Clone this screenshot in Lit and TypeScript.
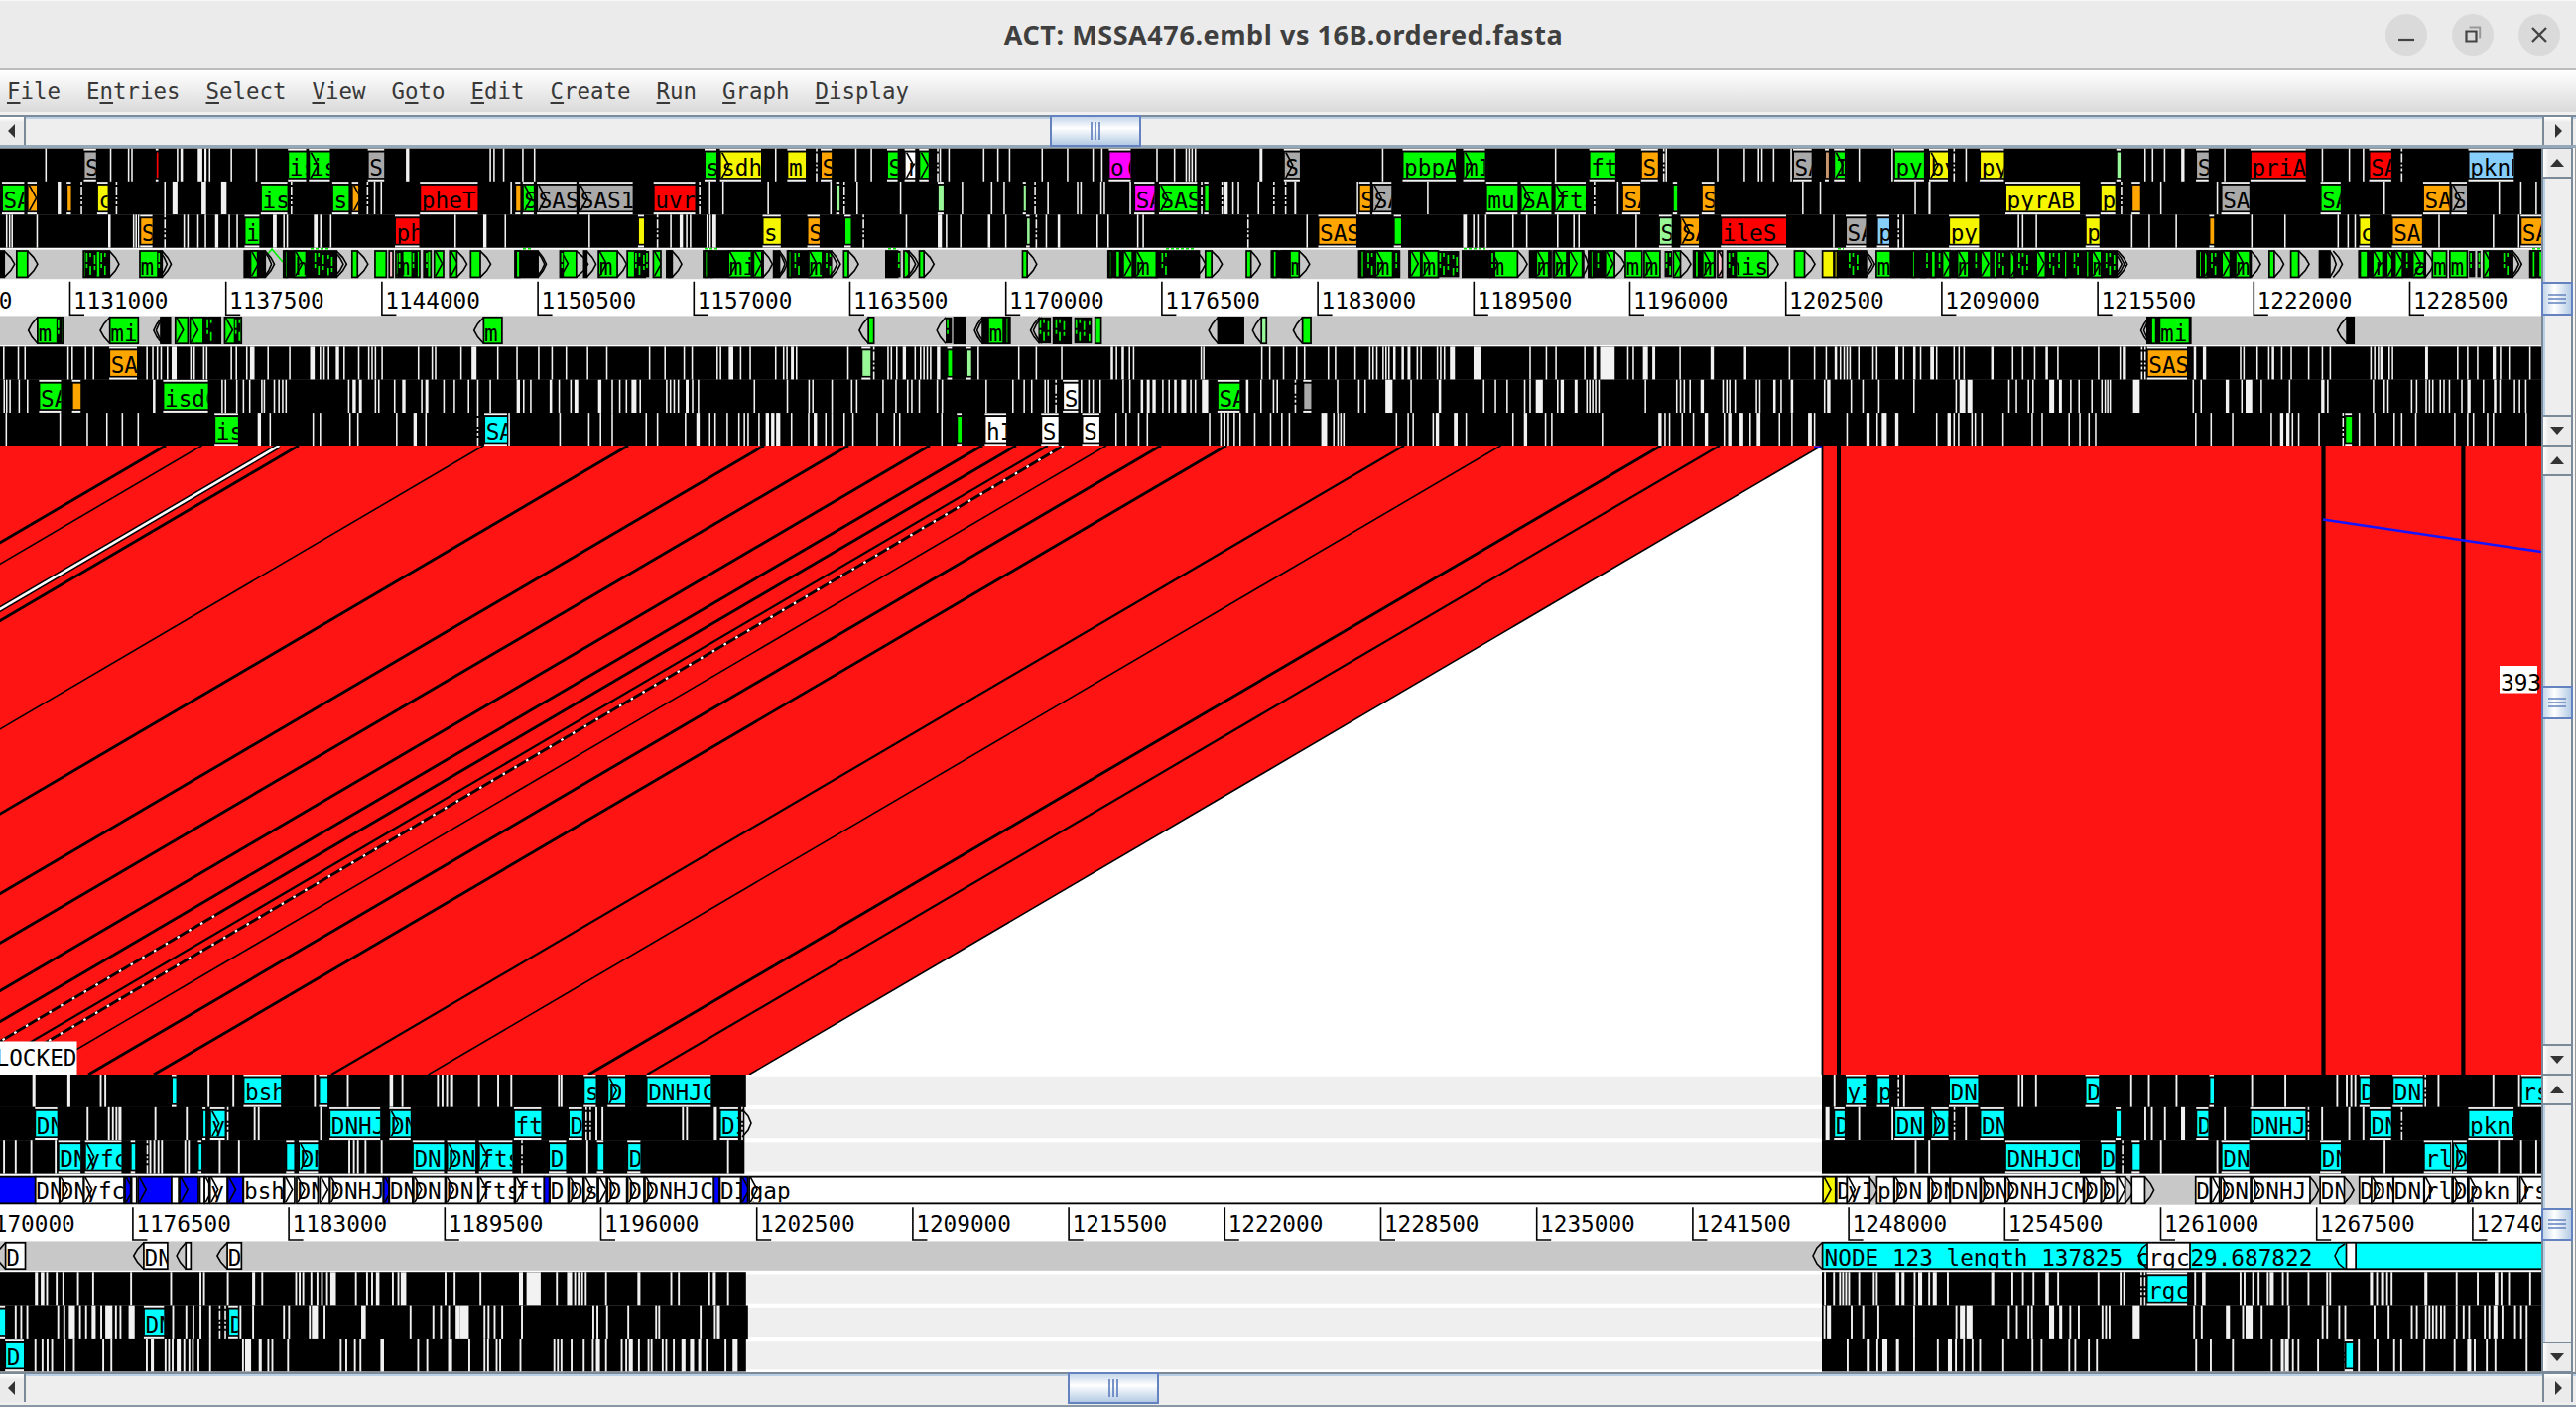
import { LitElement, html, svg, css } from "lit";
import { customElement } from "lit/decorators.js";

const LANE = 33.35;
const PLOT_W = 2561;

const COLOURS: Record<string, string> = {
  g: "#00fb00",
  l: "#98f898",
  y: "#f6f600",
  o: "#ffa500",
  r: "#ff0000",
  m: "#ff00ff",
  a: "#a9a9a9",
  c: "#00ffff",
  s: "#87cefa",
  w: "#ffffff",
  b: "#0000ff",
  p: "#ffc0cb",
  t: "#c8966e",
  k: "#000000",
};

/** A stretch of sequence: where it starts on the plot and its units per pixel. */
interface Tile {
  at: number;
  unit: number;
}

const TOP_TILES: Tile[] = [
  { at: 0, unit: 2.376 },
  { at: 650, unit: 2.376 },
  { at: 1300, unit: 2.376 },
  { at: 1940, unit: 2.39 },
];
const BOTTOM_TILES: Tile[] = [
  { at: 0, unit: 1.96 },
  { at: 1800, unit: 1.9698 },
];

interface Lane {
  gaps: string[];
  features: string[];
}

const TOP_FORWARD: Lane[] = [
  {
    gaps: [
      "110 265 308 316 425 435:6 479:11 492:5 502 554 614 976:8 1174 1183 1206 1252 1280",
      "313 411d 505 542 701d 707 728 811 845 873 951 1012 1073 1094 1226 1268 1296 1303 1310 1318 1475:7",
      "222 636 895d 901 1024 1088 1122 1130 1158 1200 1363 1442",
      "70d 99 530 548 577 621:8 722 957 1022 1056 1148d",
    ],
    features: [
      "a203-230=S r375-379 g692-733=is g742-790=>is a883-920=S",
      "g145-171=s y182-278=>sdh y343-385=m( o423-447=S g582-605=S w624-647=>r g659-679=> m1113-1163=o( a1532-1568=>S",
      "g272-397=pbpA g417-467=>mI g719-779=ft o843-881=S/ a1207-1249=SA t1283-1290 g1305-1328=>I g1449-1518=py",
      "y12-55=>by y134-190=py l463-471 a655-683=S r786-917=priA r1072-1123=SA s1311-1418=pknB",
    ],
  },
  {
    gaps: [
      "142:8 195d 279d 395 419:12 488:11 536:13 698d 880d 897 913 1224",
      "131d 155 187 295 445 477d 508 612 709 760 830 860 934d 965 1036 1044 1092 1100 1162 1333d 1382d 1391:9 1408 1421 1469 1506d 1534d 1557",
      "13 162 330 729d 785 1228 1270 1497 1532",
      "10 473d 568 704 1106 1383 1435 1472",
    ],
    features: [
      "g7-58=SA o68-88=> o162-170 y235-258=c g627-688=is g798-835=s o845-858=> r1008-1144=pheT o1236-1246 g1254-1278=>S a1288-1380=>SAS a1388-1515=>SAS1",
      "r23-120=uvrC l460-466 l703-715 l907-912 m1174-1220=SA g1233-1322=>SAS g1341-1349",
      "o168-192=S a200-243=>SA g472-545=mur g555-626=>SA g636-708=>fts o798-839=SA g919-927 o988-1016=S",
      "y196-373=pyrAB y425-458=p o500-518 a716-781=SA g955-1001=SA o1202-1263=SA a1270-1305=>S",
    ],
  },
  {
    gaps: [
      "16 23 29 89 262:6 320 326 332 395d 441 450 474 492 519:8 549 568 658:9 680 688 756:9 768 792 1090 1161:8 1210 1411",
      "30d 62 87:8 100 109 149 156 166:9 523d 626 706:10 722 756 824:6 864 937d 961 991:6 1083 1109 1180 1193 1444d",
      "41 419:9 440 450 469 534 567 641 680 692 829 1302 1457d 1469",
      "225 235 268 498 540 605 787 867 995 1019 1036 1238 1369 1430",
    ],
    features: [
      "o338-365=S g588-621=i r948-1004=ph y1530-1542",
      "y284-325=s( o391-418=S g480-493 l915-921",
      "o70-159=SAS g251-266 l886-914=S o937-979=>SA r1034-1188=ileS a1333-1379=SA s1408-1435=p",
      "y60-130=py y389-420=p o687-696 y1048-1071=c o1127-1197=SA o1437-1490=SA",
    ],
  },
];

const TOP_REVERSE: Lane[] = [
  {
    gaps: [
      "9 44 60 163 173 205 224 352 366 377 386 401 417:12 457 465 488 495 554 566 591 604:11 642 694 748:11 767 776 787 808:8 824 859 883 891 899 915 1002 1035 1043 1104 1135:12 1192 1238 1290 1322 1356 1407 1453",
      "11 48 94 113 173 181 206:11 229 252 313 332 340 353:7 363 486 548d 582 590 603 621:8 647 660 668 676 684 703:8 798 895 937 998 1118:6 1129 1144:6 1160 1170 1332 1338 1477 1496 1529",
      "16 35 92 109 156 191 199 208 223 230 237 250:6 270:6 285:7 305 314 353 361 370 389:12 448:17 575 614 637 706 730:7 760:35 809 822 851:12 871:7 934 1011:8 1090:6 1196 1256 1284 1307:6 1318 1327 1334 1341 1362 1396 1405 1453:7 1469 1495:6 1510",
      "17:9 28 70 82 94 162:6 211 235 264 293:6 320 418 470 480:8 522d 530d 650:6 673:8 760 768 800 828 838:6 859 882 924 957 976 1074 1083 1092 1099:6 1118 1126 1208:7 1283 1307 1331 1371:8 1386 1407 1457",
    ],
    features: ["o264-328=SA", "l521-540 g726-735 l772-781", "", "o537-631=SAS"],
  },
  {
    gaps: [
      "10 16 24 46 66 369:6 532 540 567 583 598 627 633 657 668 677 685 835 848:8 863:7 899 907 945 967:8 1010 1022:7 1063 1088 1122 1144 1174 1241:8 1254 1271 1319:6 1339 1367 1380:9 1436:8 1466 1484 1500 1518:12 1533",
      "52 61 70 80 101:7 114 128 262 341 393 402 448 495 507 570 601 629 639 657 700 712 817 881 908 926 958 965 984d 1045 1063 1073 1090 1145 1161 1190:6 1205:7 1219:8 1240 1255 1270:6 1290:12 1307 1318 1341:15 1442:6 1475 1505 1514",
      "13d 114 165 180 237:17 290 359:6 464 492 520 562 575 597:17 641 652:8 685:7 711 718 725 732 740 851 926 935 944 958 987:8 1037 1046 1053 1066 1117 1125 1160:6 1176 1202:6 1280 1290:8 1344 1372 1410 1494",
      "75 90:14 108:12 202 220 249 260 305:12 326:7 351 371 402 426 434 440 446 509:16 646 665 728:8 763 780:16 810 878 958:8 970 1080 1106 1115 1172 1184 1207 1215 1223 1241 1250 1263 1293 1310:8 1345 1373:6 1385 1420 1432 1447",
    ],
    features: ["g96-146=SA o175-193 g393-498=isdC", "w1003-1037=S. g1373-1424=SA", "a34-51", ""],
  },
  {
    gaps: [
      "15 144 209 256 293 331 621:8 647 750 767 838 857 950 994:8 1020 1144d 1219 1341 1410 1438 1466",
      "3 30 97 127:8 155 168 197 225 238 247 273 293:8 306:8 319:10 351 392 408:8 433 448 477 498 556 597 610 711 1128 1152 1182 1203 1352 1379 1388 1397 1411 1425 1460 1498 1525 1543",
      "82:14 105 115 122 129 255 283 295 343 353:8 397:9 422 534 564:8 612 627 748 886:8 898 909 939 966 997:8 1040 1053:8 1081:9 1102 1122:9 1172 1202 1245:9 1256 1334 1384:8 1406 1423:12 1453:8",
      "28 58:8 70 81 113 121 137 188 258 282 347 373 395 411 652 689 741 834 859:8 874:8 885 900 949 1007d 1046 1083 1130 1148 1182 1276 1307 1321 1355 1369 1448",
    ],
    features: ["g516-570=is c1162-1214=SA", "g749-758 w816-865=hI w951-990=S. w1049-1088=S.", "", "g1014-1028"],
  },
];

const BOTTOM_FORWARD: Lane[] = [
  {
    gaps: [
      "67:6 136:6 199 208 412 461 622 687 773:7 795 865 874 883 892:6 946 984 1010 1104 1109",
      "96 223d 234 462 469 496 685 720 775 925 991 1094 1113 1122 1130 1269d 1295 1404 1455",
    ],
    features: [
      "c341-348 c483-555=bsh c632-647 c1155-1177=s c1202-1235=>D c1279-1404=DNHJC",
      "c120-158=yI c182-205=p c325-381=DN c596-621=D c842-849 c1140-1158=D c1206-1264=DN c1461-1510=rs",
    ],
  },
  {
    gaps: [
      "173 215 223 230 237:6 307 369 450d 503 511 634 1158d 1166d 1178 1190 1349 1357 1413:6 1466d",
      "82:8 145 211 334d 357 713 726 752 788:8 871 1037d 1064 1118 1146 1222d",
    ],
    features: [
      "c71-113=DN c402-406 c417-444=>y c653-751=DNHJ c771-811=>DN c1017-1069=ft c1125-1150=D c1424-1458=DI",
      "c97-116=D c217-274=DN c290-322=>DN c387-433=DN c656-664 c816-838=D c923-1031=DNHJ c1160-1201=DN c1356-1444=pknB",
    ],
  },
  {
    gaps: [
      "8 31 62 110 291d 297 305 313 320 366 373 434 472 690 699 707 722 754 1031d 1160 1438",
      "257 284 668d 744 856 1188 1320 1415 1459 1489",
    ],
    features: [
      "c117-159=DN c170-240=>yfc c260-267 c393-398 c567-581 c592-628=>DN c817-877=DN c885-939=>DN c948-1012=>fts c1086-1118=D c1181-1192 c1241-1265=D",
      "c437-583=DNHJCM c626-653=D c688-702 c866-919=DN c1062-1101=DN c1268-1318=rl c1326-1351=>D",
    ],
  },
];

const BOTTOM_REVERSE: Lane[] = [
  {
    gaps: [
      "72:6 84:7 93 112 125 154 184 259 338 396 403 450 501:6 518 585 592 599 615 627 636 646 658:11 703 725 735 746:7 776 787 797:11 880 898 949 1029:8 1054:28 1100 1125:10 1136 1143 1150 1157 1197 1262:6 1326 1341 1401 1411:6 1438",
      "77 95 107 113 119 125 145 174 180 221:7 232:6 255 266:8 284 295:8 321 410:6 449 470 491 518:7 540 620 664 671 705d 712d 812 829:7 902 910 927 938 956 964:8 986 996 1037 1074 1080 1162:6 1173 1184:6 1193 1202 1270:6 1331 1373 1410:7 1420 1435 1477",
    ],
    features: ["", "c718-796=rgc"],
  },
  {
    gaps: [
      "31 42 54 115 127 142:12 158 170 185:8 200 215:14 229 238 260:12 342 368 382 396 415 434d 445d 475 500 561 571 612 622:12 641 718:9 811 856 871 887 904:8 917:18 957 965 977 992 1031 1172 1180 1199 1241 1296 1302 1384 1412 1419:6",
      "76 85:8 130 153 183 254 338 350:10 364:12 442 458 481 488 527:10 545:6 564 581 628 635 642 695:14 810 825 877:8 907 919:14 944 998 1065 1074 1098 1110 1168 1196 1242 1252 1270 1277 1284 1291 1300 1307 1331 1345 1356 1387 1396 1408:8 1422 1447 1459 1470",
    ],
    features: ["c0-10 c286-324=DN c453-470=D", ""],
  },
  {
    gaps: [
      "70 84 94 103 128 146 204 220 290 301:6 327 334 341 353:8 364 374 381 392 415 480 490:12 514:6 530 538 569 673 684 701 712 755:7 826 844 889:8 927 957 964 981 988 1028 1095 1102 1109 1129 1153 1171 1181:8 1197 1228 1237 1246:8 1262 1281 1287 1309 1316 1331 1350:8 1367:8 1382:6 1396 1433 1452:10",
      "122 163:6 181 196:10 221:6 254 301 325:8 337 353 370 385 431 489 507 562 574 601 617 814 843 887 964 985:6 994:8 1006 1017 1056 1110d 1137 1174 1207 1221 1267 1327 1356:8 1367 1391 1408 1470",
    ],
    features: ["c12-47=D", "c1112-1125"],
  },
];

/*
 * Strand entries: a colour letter and a span draws an outlined box, "h" a
 * crowded stack of genes, ">" and "<" a direction arrow from base to tip.
 */
const TOP_STRAND_FORWARD = [
  "k2-10 >10-35 g40-66 >66-90 g200-262=m h203-232 h238-262 >262-285 g335-388=m h376-388 >382-400 >388-410 k585-635 g600-617=> >632-650 >635-657 k679-806 g683-688 g705-733=>h h750-800 >800-822 >806-830 g843-856 >856-881 g898-925 p932-941 g948-1005=>m h952-966 h985-1000 g1015-1032 h1017-1025 g1040-1062=> g1077-1094=> >1094-1118 g1127-1150 >1150-1175 k1233-1288 g1236-1245 >1284-1304 >1288-1308 g1341-1380=> h1341-1350 >1380-1408 k1398-1405 >1405-1427 g1433-1478=>m >1478-1500 g1502-1545 h1518-1545",
  "h0-10 g20-38=> k52-65 g57-61 >65-88 k140-283 g144-150 g158-161 g200-255=>mi g260-280=> >283-305 k308-322 >318-335 >322-340 k341-446 g344-350 h355-380 g392-425=>m h430-446 >440-460 >446-468 g476-487 >487-511 k577-605 h603-612 g620-632 >626-648 >632-655 g657-668 >668-692 g904-915 >915-938 k1109-1225 g1112-1117 g1127-1137 g1145-1167=> g1175-1225=>m k1225-1327 h1234-1252 >1320-1342 g1342-1357 >1357-1382 g1440-1451 >1451-1474 k1500-1544 g1504-1512",
  "k-20-5 g0-22=m >22-47 k165-262 g170-177 h183-200 g205-246=>m h250-264 k285-355 g288-313=> g316-355=>m h355-405 k413-480 g480-545=>m h480-492 >545-568 k574-625 g590-620=>m k630-703 g633-663=>m g668-700=> >700-714 k715-777 g720-726 h733-748 g755-777=> >777-802 g803-843=m g848-886=>m h897-915 g918-935=> >935-960 k966-1018 g970-978 g988-1016=>m p1024-1035=> g1047-1145=>his h1047-1070 >1145-1169 g1208-1232 >1232-1257 k1310-1380 h1335-1372 >1372-1394 >1378-1400 g1404-1438=m k1440-1522 g1490-1496 y1275-1302 y1304-1310",
  "k-10-462 h0-14 g15-25 h30-40 g42-60=> g78-105=>m h118-128 g134-158=> g165-172 h175-200 g205-215=> h222-256 g268-290=> h296-312 h318-325 g335-342 h355-375 g388-395 g402-425=>m h432-458 >452-474 >458-480 >464-487 k655-785 g660-666 g672-680=> h686-706 g715-735=> g748-782=>m >785-808 g829-841 >841-864 g881-900 >900-925 k950-975 >975-990 >983-1005 k1045-1205 g1048-1066 g1078-1103=>r g1112-1125=> g1132-1150=> h1156-1170 g1175-1203=>a >1205-1225 g1222-1256=m g1264-1306=m h1310-1325 h1330-1338 g1345-1360=> k1360-1415 h1390-1412 >1410-1430 >1415-1437 k1457-1492 g1462-1470 g1478-1492",
];
const TOP_STRAND_REVERSE = [
  "g90-150=m h135-148 <90-68 g263-331=mi <263-240 k385-408 <388-368 <392-374 g420-450=> g455-487=> k487-528 h492-512 g538-578=> h560-576 g1158-1202=m <1158-1135",
  "g535-548 <535-513 h720-735 <720-699 k740-767 k808-874 g822-858=m g864-870 <808-789 <814-795 h942-972 <945-923 <950-930 k978-1020 h980-1012 h1028-1070 g1078-1092 k1372-1433 <1372-1350 l1476-1488 <1476-1455",
  "g30-50 <30-8",
  "k535-640 g565-637=mi g545-556 <540-520 <545-527 k1016-1033 <1016-993",
];
const BOTTOM_STRAND_FORWARD = [
  "w1480-3610=>gap b-4-70 w70-117=DN w118-165=>DN w166-245=>yfc b247-258=> w260-270 b273-339=> w339-353 b355-392=> w395-404 w404-413=> w415-449=>y b450-480=> w481-560=bsh w562-582=> w586-628=>DN w632-651=> w652-757=>DNHJ b758-768=> w769-815=DN w817-879=>DN w881-944=>DN w946-1016=>fts w1018-1075=>ft b1075-1085 w1086-1122=D w1124-1152=>D w1154-1180=>s w1182-1198=> w1200-1238=>D w1240-1272=>D w1274-1410=>DNHJC b1410-1421 w1422-1463=DI b1464-1477=>",
  "w100-121=D w121-166=>yI >164-181 w180-214=p w215-282=>DN w284-325=>DN w326-385=DN w387-435=>DN w436-590=>DNHJCM w592-625=>D w626-657=>D w657-673=> >673-690 w686-712 >712-730 w813-842=D w844-860=> w863-922=>DN w924-1040=>DNHJ >1040-1057 w1060-1108=DN >1108-1127 w1138-1162=D w1162-1205=>DN w1206-1266=DN w1267-1322=>rl w1324-1353=>D w1355-1453=>pkn w1457-1510=>rs y73-98=>",
];
const BOTTOM_STRAND_REVERSE = ["w11-50=D <11--8 w284-331=DN <284-264 w367-377 <367-349 w449-477=D <449-429"];

const px = (tile: Tile, v: number) => tile.at + v / tile.unit;

function label(x: number, y: number, w: number, h: number, baseline: number, text: string) {
  const tip = text.startsWith(">");
  const word = tip ? text.slice(1) : text;
  return svg`<svg x=${x} y=${y} width=${Math.max(w, 0.1)} height=${h} overflow="hidden">
    ${tip ? svg`<polyline class="tip" points=${`1,0 8,${h / 2} 1,${h}`}></polyline>` : null}
    ${word ? svg`<text class="mono" x="0.6" y=${baseline}>${word}</text>` : null}
  </svg>`;
}

function drawGaps(tile: Tile, y: number, list: string) {
  return list.split(" ").filter(Boolean).map((token) => {
    const dashed = token.endsWith("d");
    const [at, width] = token.replace("d", "").split(":").map(Number);
    const w = (width ?? 3.7) / tile.unit;
    const x = px(tile, at);
    return dashed
      ? svg`<line class="dash" x1=${x} x2=${x} y1=${y} y2=${y + LANE}></line>`
      : svg`<rect class="gap" x=${x - w / 2} y=${y} width=${w} height=${LANE}></rect>`;
  });
}

function parseSpan(token: string) {
  const m = /^(.)(-?\d+)-(-?\d+)(?:=(.*))?$/.exec(token)!;
  return { kind: m[1], from: Number(m[2]), to: Number(m[3]), text: m[4] ?? "" };
}

function drawFeatures(tile: Tile, y: number, list: string) {
  return list.split(" ").filter(Boolean).map((token) => {
    const f = parseSpan(token);
    const x = px(tile, f.from);
    const w = px(tile, f.to) - x;
    return svg`
      <rect class="edge" x=${x - 1} y=${y + 0.2} width=${w + 1} height=${LANE - 0.4}></rect>
      <rect x=${x - 1.8} y=${y + 2} width=${w + 3} height=${LANE - 4.2}></rect>
      <rect x=${x} y=${y + 3.9} width=${w} height="25.6" fill=${COLOURS[f.kind]}></rect>
      ${f.text ? label(x, y + 3.9, w, 25.6, 23, f.text) : null}`;
  });
}

function drawLanes(tiles: Tile[], lanes: Lane[], y0: number, reading: (lane: number) => [number, number][]) {
  return lanes.map((lane, i) => {
    const y = y0 + i * LANE;
    return svg`
      <rect class="stripe" x="0" y=${y + 2.2} width=${PLOT_W} height="29.2"></rect>
      ${reading(i).map(([a, b]) => svg`<rect x=${a} y=${y - 0.1} width=${b - a} height=${LANE + 0.2}></rect>`)}
      ${tiles.map((t, k) => drawGaps(t, y, lane.gaps[k]))}`;
  }).concat(
    lanes.map((lane, i) => svg`${tiles.map((t, k) => drawFeatures(t, y0 + i * LANE, lane.features[k]))}`),
  );
}

function drawStrand(tiles: Tile[], y: number, h: number, lists: string[], baseline: number) {
  return lists.map((list, k) => list.split(" ").map((token) => {
    const f = parseSpan(token);
    const tile = tiles[k];
    const a = px(tile, f.from);
    const b = px(tile, f.to);
    if (f.kind === ">" || f.kind === "<") {
      const mid = (a + b) / 2 + (b - a) * 0.12;
      return svg`<polyline class="arrow" points=${`${a},${y} ${mid},${y + h * 0.25} ${b},${y + h / 2} ${mid},${y + h * 0.75} ${a},${y + h}`}></polyline>`;
    }
    if (f.kind === "h") {
      const lines = [];
      for (let x = a + 2, i = 0; x < b - 0.8; x += 3.6 + ((i * 7) % 3) * 0.8, i++) {
        lines.push(svg`<line class="stack" x1=${x} x2=${x} y1=${y + 2} y2=${y + h - 2} stroke-dashoffset=${(i * 11) % 24}></line>`);
      }
      return svg`<rect x=${a} y=${y} width=${b - a} height=${h}></rect>${lines}`;
    }
    return svg`
      <rect class="box" x=${a} y=${y} width=${b - a} height=${h} fill=${COLOURS[f.kind]}></rect>
      ${f.text ? label(a, y, b - a, h - 1, baseline - y, f.text) : null}`;
  }));
}

function drawRuler(first: number, firstBase: number, y: number, baseline: number) {
  const marks = [];
  for (let i = -1; i < 17; i++) {
    const x = first + i * 157.2;
    if (x > PLOT_W) break;
    marks.push(svg`
      <polyline class="tick" points=${`${x},${y + 2.5} ${x},${y + 36.2} ${x + 14.5},${y + 36.2}`}></polyline>
      <text class="mono" x=${x + 3.4} y=${baseline}>${firstBase + i * 6500}</text>`);
  }
  return marks;
}

@customElement("app-root")
export class AppRoot extends LitElement {
  static styles = css`
    :host {
      display: flex;
      flex-direction: column;
      width: 2596px;
      height: 1418px;
      overflow: hidden;
      background: #eee;
      font-family: "DejaVu Sans Mono", "Liberation Mono", monospace;
    }
    svg { display: block; }
    .title {
      flex: none;
      height: 71px;
      box-sizing: border-box;
      border-top: 1px solid #f8f8f8;
      border-bottom: 2px solid #bcbcbc;
      background: #ebebeb;
      display: grid;
      grid-template-columns: 1fr auto 1fr;
      align-items: center;
    }
    .title h1 {
      grid-column: 2;
      margin: 0 0 0 -9px;
      font: 700 27px/38px "Noto Sans", "Open Sans", sans-serif;
      letter-spacing: 0.56px;
      color: #3f3f3f;
    }
    .buttons { display: flex; justify-content: flex-end; gap: 25px; padding-right: 16px; }
    .menu {
      flex: none;
      height: 45px;
      box-sizing: border-box;
      display: flex;
      gap: 26.1px;
      padding: 0 7px 3px;
      align-items: center;
      background: linear-gradient(#fff, #dadada 93%, #f0f0f0 94%);
      font-size: 22.4px;
      line-height: 42px;
      color: #383838;
    }
    .menu u { text-decoration-thickness: 2px; text-underline-offset: 3px; }
    .hbar {
      flex: none;
      height: 33px;
      box-sizing: border-box;
      display: flex;
      border-top: 2px solid #7a8a99;
      border-bottom: 3px solid #94a8b9;
      background: #eee;
      box-shadow: inset 0 2px #b8cfe5;
      padding-right: 3px;
    }
    .hbar.low { height: 35px; border-bottom-width: 2px; padding-bottom: 3px; border-bottom-color: #8a98a6; }
    .cap {
      flex: none;
      width: 26px;
      display: grid;
      place-items: center;
      background: linear-gradient(#fff, #ebebeb 20%);
      border-right: 2px solid #7a8a99;
      box-sizing: border-box;
    }
    .cap.end { width: 31px; border-left: 2px solid #7a8a99; }
    .rail { flex: 1; display: flex; }
    .thumb {
      flex: none;
      width: 92px;
      box-sizing: border-box;
      border: 2px solid #6382bf;
      margin: -2px 0;
      background: linear-gradient(#c5d6ea, #fff 40%, #b4cbe4);
      display: grid;
      place-items: center;
    }
    .band { flex: none; display: flex; background: #fff; }
    .top, .bottom { height: 300px; }
    .middle { height: 634px; }
    .vbar {
      width: 32px;
      box-sizing: border-box;
      margin-right: 3px;
      display: flex;
      flex-direction: column;
      border: 2px solid #7a8a99;
      border-top-width: 1px;
      border-bottom-width: 1px;
      background: #eee;
      box-shadow: inset 2px 0 #b8cfe5, 2px 0 #f5f5f5, 3px 0 #9a9a9a;
    }
    .vbar .cap { width: 28px; height: 30px; border: 0; border-bottom: 2px solid #7a8a99; background: linear-gradient(90deg, #fff, #ebebeb 20%); }
    .vbar .cap.end { border: 0; border-top: 2px solid #7a8a99; }
    .vbar .rail { flex-direction: column; }
    .vbar .thumb { width: 32px; height: 34px; margin: 0 -2px; background: linear-gradient(90deg, #c5d6ea, #fff 40%, #b4cbe4); }
    .mono { font: 22.7px "DejaVu Sans Mono", "Liberation Mono", monospace; fill: #000; white-space: pre; }
    .gap { fill: #f2f2f2; }
    .dash { stroke: #eee; stroke-width: 1.6; stroke-dasharray: 3 2 9 2 2 2; }
    .edge { fill: #f4f4f4; }
    .stripe { fill: #efefef; }
    .strand { fill: #c8c8c8; }
    .box { stroke: #000; stroke-width: 1.7; }
    .arrow, .tick, .tip { fill: none; stroke: #000; stroke-width: 1.6; }
    .stack { stroke: #00f000; stroke-width: 1.7; stroke-dasharray: 9 2 4 9; }
    .spark { stroke: #00f000; stroke-width: 1.6; fill: none; }
    .cut { stroke: #000; }
    .dots { stroke: #fff; stroke-width: 2.2; stroke-dasharray: 2.6 11; }
  `;

  private arrow(dir: string) {
    const shape: Record<string, string> = {
      left: "11,1 11,15 4,8",
      right: "5,1 5,15 12,8",
      up: "1,12 15,12 8,4",
      down: "1,4 15,4 8,12",
    };
    return html`<svg width="16" height="16" viewBox="0 0 16 16"><polygon points=${shape[dir]} fill="#333"></polygon></svg>`;
  }

  private horizontal(offset: number, low = false) {
    return html`<div class="hbar ${low ? "low" : ""}">
      <div class="cap">${this.arrow("left")}</div>
      <div class="rail">
        <div style="width:${offset - 26}px"></div>
        <div class="thumb">
          <svg width="14" height="20" viewBox="0 0 14 20"><path d="M3 1V19M7 1V19M11 1V19" stroke="#6382bf" stroke-width="1.7"></path></svg>
        </div>
      </div>
      <div class="cap end">${this.arrow("right")}</div>
    </div>`;
  }

  private vertical(offset: number) {
    return html`<div class="vbar">
      <div class="cap">${this.arrow("up")}</div>
      <div class="rail">
        <div style="height:${offset - 31}px"></div>
        <div class="thumb">
          <svg width="20" height="14" viewBox="0 0 20 14"><path d="M1 3H19M1 7H19M1 11H19" stroke="#6382bf" stroke-width="1.7"></path></svg>
        </div>
      </div>
      <div class="cap end">${this.arrow("down")}</div>
    </div>`;
  }

  private topPanel() {
    const whole = (): [number, number][] => [[0, PLOT_W]];
    const sparks = [[313, 18], [527, 8], [710, 14], [895, 8], [1175, 30], [1475, 22], [1852, 6], [2552, 8]];
    return svg`<svg width=${PLOT_W} height="300" viewBox="0 149 2561 300">
      ${drawLanes(TOP_TILES, TOP_FORWARD, 149.6, whole)}
      <rect class="strand" x="0" y="251.6" width=${PLOT_W} height="29.6"></rect>
      <polyline class="spark" points="270,256 274,251 279,257 285,264"></polyline>
      ${sparks.map(([x, w]) => svg`<line class="spark" x1=${x} x2=${x + w} y1="250.8" y2="250.8" stroke-dasharray="3 2"></line>`)}
      ${drawStrand(TOP_TILES, 253, 26.4, TOP_STRAND_FORWARD, 276.8)}
      ${drawRuler(70.5, 1131000, 281.2, 310.6)}
      <rect class="strand" x="0" y="318.4" width=${PLOT_W} height="29.6"></rect>
      ${drawStrand(TOP_TILES, 319.8, 26.4, TOP_STRAND_REVERSE, 343.6)}
      ${drawLanes(TOP_TILES, TOP_REVERSE, 349.4, whole)}
    </svg>`;
  }

  private comparison() {
    const thick = [167, 301, 633, 770, 855, 937, 990, 1024, 1056, 1072, 1170, 1236, 1415, 1674, 1733];
    const thin = [203.5, 487.5, 1115, 1512.5, 1836];
    const cut = (x: number, w: number) => svg`<line class="cut" x1=${x} y1="449" x2=${x - 1081} y2="1083" stroke-width=${w}></line>`;
    return svg`<svg width=${PLOT_W} height="634" viewBox="0 449 2561 634">
      <polygon points="0,449 1836,449 755,1083 0,1083" fill="#ff1414"></polygon>
      <rect x="1836" y="449" width="725" height="634" fill="#ff1414"></rect>
      ${thick.map((x) => cut(x, x === 1056 || x === 1733 || x === 1415 ? 2.2 : 2.8))}
      ${thin.map((x) => cut(x, 1.6))}
      ${cut(281.5, 5.6)}
      <line x1="281.5" y1="449" x2="-799.5" y2="1083" stroke="#fff" stroke-width="2.6"></line>
      <line class="dots" x1="1072" y1="449" x2="-9" y2="1083"></line>
      <line class="dots" x1="216" y1="923" x2="-57" y2="1083"></line>
      <rect x="1835.6" y="449" width="1.8" height="634"></rect>
      <rect x="1851" y="449" width="4" height="634"></rect>
      <rect x="2339.4" y="449" width="4.2" height="634"></rect>
      <rect x="2480.3" y="449" width="4.2" height="634"></rect>
      <rect x="1828" y="449.5" width="8" height="2.4" fill="#1414ff"></rect>
      <line x1="2341" y1="523.5" x2="2561" y2="556" stroke="#1414ff" stroke-width="2.6"></line>
      <rect x="2519" y="671" width="38" height="27.5" fill="#fff"></rect>
      <text class="mono" x="2520" y="696">393</text>
      <rect x="0" y="1049.5" width="77.5" height="33.5" fill="#fff"></rect>
      <text class="mono" x="-4.5" y="1074">LOCKED</text>
    </svg>`;
  }

  private bottomPanel() {
    const ends = [751.8, 750.3, 750.3];
    const lowEnds = [751.8, 753.8, 751.8];
    return svg`<svg width=${PLOT_W} height="300" viewBox="0 1083 2561 300">
      ${drawLanes(BOTTOM_TILES, BOTTOM_FORWARD, 1082.5, (i) => [[0, ends[i]], [1836, PLOT_W]])}
      <polyline class="arrow" points="748,1118 754,1125 757,1132 754,1139 748,1146"></polyline>
      <rect class="strand" x="0" y="1184.3" width=${PLOT_W} height="29.4"></rect>
      ${drawStrand(BOTTOM_TILES, 1185.7, 26.6, BOTTOM_STRAND_FORWARD, 1208.3)}
      ${drawRuler(133.9, 1176500, 1213.8, 1242.2)}
      <rect class="strand" x="0" y="1251.4" width=${PLOT_W} height="29.4"></rect>
      ${drawStrand(BOTTOM_TILES, 1252.8, 26.4, BOTTOM_STRAND_REVERSE, 1276)}
      <polyline class="arrow" points="1836,1253 1831,1258 1827,1266 1831,1274 1836,1279"></polyline>
      <rect class="box" x="1836.6" y="1252.8" width="740" height="26.4" fill="#00ffff"></rect>
      ${label(1838, 1253, 570, 25.6, 23, "NODE_123_length_137825_cov_29.687822")}
      <polyline class="arrow" points="2164,1254 2159,1258 2155,1266 2159,1274 2164,1279"></polyline>
      <rect class="box" x="2164" y="1252.8" width="43" height="26.4" fill="#fff"></rect>
      ${label(2165, 1253, 41, 25.6, 23, "rgc")}
      <polyline class="arrow" points="2363,1254 2357,1258 2353,1266 2357,1274 2363,1279"></polyline>
      <rect class="box" x="2364.5" y="1252.8" width="9.6" height="26.4" fill="#fff"></rect>
      ${drawLanes(BOTTOM_TILES, BOTTOM_REVERSE, 1282.3, (i) => [[0, lowEnds[i]], [1836, PLOT_W]])}
    </svg>`;
  }

  render() {
    const menu: [string, string, string][] = [
      ["", "F", "ile"], ["E", "n", "tries"], ["", "S", "elect"], ["", "V", "iew"], ["G", "o", "to"],
      ["", "E", "dit"], ["", "C", "reate"], ["", "R", "un"], ["", "G", "raph"], ["", "D", "isplay"],
    ];
    return html`
      <div class="title">
        <h1>ACT: MSSA476.embl vs 16B.ordered.fasta</h1>
        <div class="buttons">
          <svg width="42" height="42" viewBox="0 0 42 42"><circle cx="21" cy="21" r="21" fill="#dadada"></circle><path d="M13 26H29" stroke="#444" stroke-width="2.2"></path></svg>
          <svg width="42" height="42" viewBox="0 0 42 42"><circle cx="21" cy="21" r="21" fill="#dadada"></circle><path d="M14.5 17.5H24.5V27.5H14.5Z" fill="none" stroke="#444" stroke-width="2.2"></path><path d="M17.5 13.6H28.2V24.5" fill="none" stroke="#999" stroke-width="2"></path></svg>
          <svg width="42" height="42" viewBox="0 0 42 42"><circle cx="21" cy="21" r="21" fill="#dadada"></circle><path d="M14 14L28 28M28 14L14 28" stroke="#444" stroke-width="2.4"></path></svg>
        </div>
      </div>
      <div class="menu">${menu.map(([a, u, b]) => html`<span>${a}<u>${u}</u>${b}</span>`)}</div>
      ${this.horizontal(1058)}
      <div class="band top">${this.topPanel()}${this.vertical(135)}</div>
      <div class="band middle">${this.comparison()}${this.vertical(242)}</div>
      <div class="band bottom">${this.bottomPanel()}${this.vertical(134)}</div>
      ${this.horizontal(1076, true)}
    `;
  }
}
